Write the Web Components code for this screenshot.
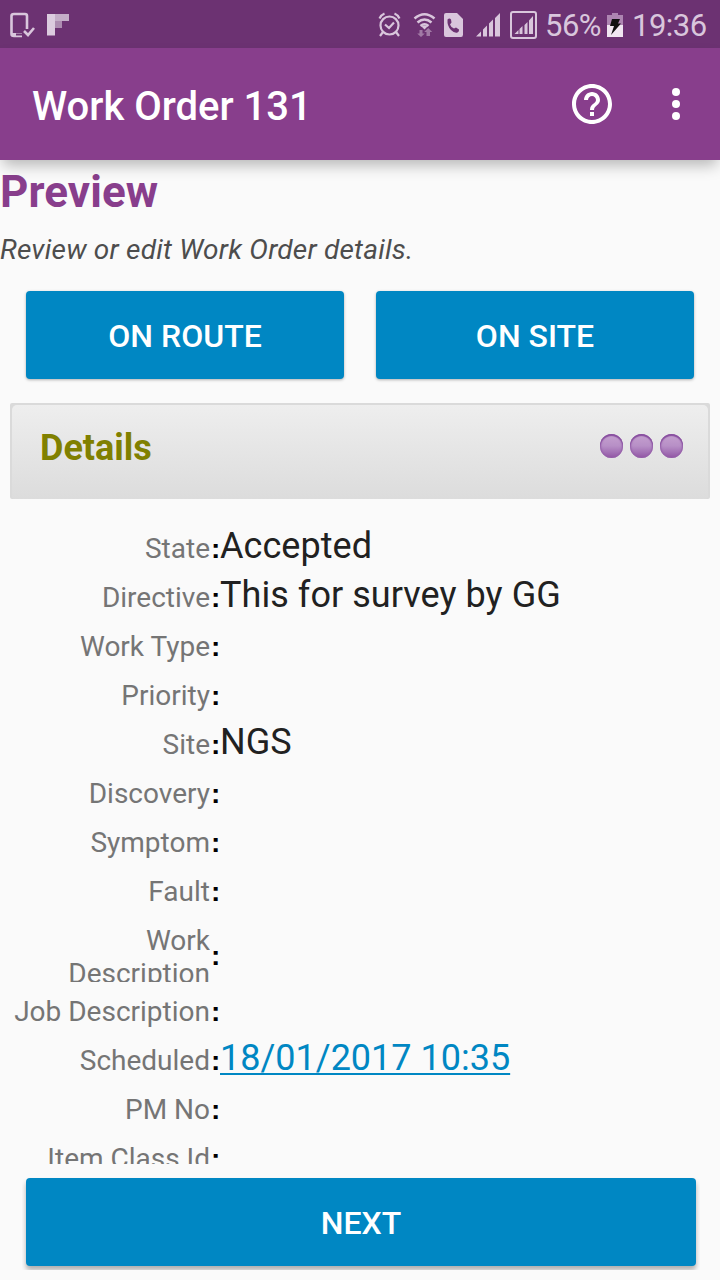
<!DOCTYPE html>
<html lang="en">
<head>
<meta charset="utf-8">
<title>Work Order 131</title>
<style>
  html, body { margin: 0; padding: 0; background: #fafafa; }
  body { font-family: Roboto, sans-serif; width: 720px; height: 1280px; overflow: hidden; }
</style>
</head>
<body>
<work-order-screen></work-order-screen>

<script>
function define(name, html) {
  const template = document.createElement('template');
  template.innerHTML = html;
  customElements.define(name, class extends HTMLElement {
    constructor() {
      super();
      this.attachShadow({ mode: 'open' }).append(template.content.cloneNode(true));
    }
  });
}

define('status-bar', `
<style>
  :host { display: grid; grid-template-columns: 80px 1fr 172px 60px 26px 92px; height: 48px; background: #6c3272; color: #d9c6dc; font-size: 31px; line-height: 52px; white-space: nowrap; }
  svg { display: block; height: 48px; }
  .pct { padding-left: 3px; letter-spacing: -.5px; }
  .time { padding-left: 4px; letter-spacing: -.5px; }
</style>
<svg width="80" viewBox="0 0 80 48" fill="none">
  <path d="M27 29V16q0-2-2-2H14q-2.500 0-2.500 2v18q0 2 2.500 2h8" stroke="#d9c6dc" stroke-width="2.600"/>
  <path d="M11 33h11v2.500H12z" fill="#d9c6dc"/><path d="M16 33.500h6v2h-6z" fill="#6c3272"/>
  <path d="M24 31l4 4 6-7" stroke="#d9c6dc" stroke-width="2.600"/>
  <path d="M47 14h8v21.500h-8z" fill="#dccbdf"/><path d="M55 14h14v7H55z" fill="#c4adc8"/><path d="M55 21h7v7h-7z" fill="#ad8cb1"/>
</svg>
<span></span>
<svg width="172" viewBox="370 0 172 48" fill="none">
  <g stroke="#d9c6dc" stroke-width="2.200">
    <circle cx="389.500" cy="25.500" r="9"/>
    <path d="M379.500 18.500q1.500-3.500 5-5M399.500 18.500q-1.500-3.500-5-5M383 32l-3 4M396 32l3 4M385 24.500l4 3.500 5-5.500"/>
    <path d="M414.500 18.500q10-8.500 20 0M417.500 22.500q7-6 14 0M420.500 26q4-3.500 8 0" stroke-width="2.500"/>
  </g>
  <path d="M421.500 26.500q3-2 6 0l-3 3z" fill="#d9c6dc"/>
  <path d="M419.500 30h3v3.500h2.300L421 37l-3.800-3.500h2.300zM426.500 36v-4h-2.300l4-4 4 4h-2.200v4z" fill="#a17aa5"/>
  <path d="M446 13h11l6 6v15.500q0 2.500-2 2.500h-15q-2 0-2-2V15q0-2 2-2z" fill="#d9c6dc"/>
  <path d="M447.500 19.500q2-2 3.500 0l.5 3-1.500 2q1 3 4 4l2-1 3 2q.5 2-1.500 3-3 1-6.500-2.500-4-4-3.500-10.500z" fill="#6c3272"/>
  <path d="M476 36.500l5-5v5zM483 36.500V29.500l4-4v11zM489 36.500V23.500l4-4v17zM495 36.500V18l5-5v23.500z" fill="#d9c6dc"/>
  <rect x="511" y="12" width="25" height="26" rx="2" stroke="#d9c6dc" stroke-width="2"/>
  <path d="M514.500 34l4-4v4zM519.500 34v-5l3-3v8zM524.500 34V25l3-3v12zM529 34V20.500l4-4.500v18z" fill="#d9c6dc"/>
</svg>
<span class="pct">56%</span>
<svg width="26" viewBox="602 0 26 48">
  <path d="M607 15h5v-2h6v2h5v10h-16z" fill="#ad85b1"/><path d="M607 25h16v12h-16z" fill="#f0e6f1"/>
  <path d="M612 19h8l-2 4.500h3L611 35l3-9h-4z" fill="#111"/>
</svg>
<span class="time">19:36</span>
`);

define('app-bar', `
<style>
  :host { display: flex; align-items: center; height: 112px; box-sizing: border-box; padding-left: 32px; background: #883e8c; color: #fff; position: relative; z-index: 1; box-shadow: 0 8px 14px -3px rgba(0,0,0,.28); }
  h1 { flex: 1; margin: 5px 0 0; font-size: 40px; line-height: 48px; font-weight: 500; padding-top: 1px; }
  svg { display: block; flex: none; }
</style>
<h1><slot></slot></h1>
<svg width="160" height="112" viewBox="560 48 160 112">
  <g transform="translate(568 80) scale(2)"><path fill="#fff" d="M11 18h2v-2h-2v2zm1-16C6.480 2 2 6.480 2 12s4.480 10 10 10 10-4.480 10-10S17.520 2 12 2zm0 18c-4.410 0-8-3.590-8-8s3.590-8 8-8 8 3.590 8 8-3.590 8-8 8zm0-14c-2.210 0-4 1.790-4 4h2c0-1.100.9-2 2-2s2 .9 2 2c0 2-3 1.750-3 5h2c0-2.250 3-2.500 3-5 0-2.210-1.790-4-4-4z"/></g>
  <g fill="#fff"><circle cx="676" cy="92" r="4"/><circle cx="676" cy="104" r="4"/><circle cx="676" cy="116" r="4"/></g>
</svg>
`);

define('action-button', `
<style>
  :host { display: block; flex: 1; }
  button { display: block; width: 100%; height: 88px; border: 0; padding: 2px 0 0; border-radius: 4px; background: #0087c3; color: #fff; font: 500 32px/38px Roboto, sans-serif; box-shadow: var(--button-shadow, 0 1px 3px rgba(0,0,0,.3)); }
</style>
<button><slot></slot></button>
`);

define('section-header', `
<style>
  :host { display: flex; justify-content: space-between; box-sizing: border-box; height: 96px; margin: 0 10px; background: #dadada; border-radius: 2px; padding: 2px 2px 0; }
  .face { flex: 1; display: flex; justify-content: space-between; align-items: flex-start; border-radius: 5px 5px 3px 3px; background: linear-gradient(#eee, #dcdcdc); padding: 22px 25px 0 28px; }
  h3 { margin: 0; font-size: 36px; line-height: 42px; font-weight: 700; color: #808000; }
  .dots { display: flex; gap: 7px; margin-top: 7px; }
  i { box-sizing: border-box; width: 23px; height: 24px; border-radius: 50%; background: linear-gradient(#c6a2d0, #b78fc6 50%, #9156a5); box-shadow: inset 0 2px 1px #8950a0, inset 1px 0 2px #9560aa, inset -1px 0 2px #9560aa; }
</style>
<div class="face"><h3><slot></slot></h3><div class="dots"><i></i><i></i><i></i></div></div>
`);

define('detail-row', `
<style>
  :host { display: grid; grid-template-columns: 210px 10px 1fr; height: 49px; align-items: start; --label-height: 39px; --colon-top: 0px; }
  :host([tall]) { height: 71px; --label-height: 58px; --colon-top: 15px; }
  .label { margin-top: 10px; height: var(--label-height); overflow: hidden; text-align: right; font-size: 28px; line-height: 33px; color: #757575; }
  .colon { margin-top: var(--colon-top); padding: 10px 0 0 1px; font: bold 28px/33px "Liberation Sans", sans-serif; color: #000; }
  .value { padding-top: 3px; font-size: 36px; line-height: 42px; letter-spacing: .05px; color: #212121; white-space: nowrap; }
  :host([link]) .value { letter-spacing: 0; color: #0087c3; text-decoration: underline; text-decoration-thickness: 2px; text-underline-offset: 3px; text-decoration-skip-ink: none; }
</style>
<div class="label"><slot name="label"></slot></div><div class="colon">:</div><div class="value"><slot></slot></div>
`);

define('work-order-screen', `
<style>
  :host { display: flex; flex-direction: column; width: 720px; height: 1280px; background: #fafafa; overflow: hidden; }
  :host > * { flex: none; }
  h2 { margin: 6px 0 0; font-size: 44px; line-height: 52px; font-weight: 700; letter-spacing: .1px; color: #883e8c; }
  p { margin: 15px 0 0; font-size: 28px; line-height: 33px; font-style: italic; letter-spacing: .21px; color: #4d4d4d; }
  .actions { display: flex; gap: 32px; padding: 0 26px; margin: 25px 0 24px; }
  .rows { margin-top: 23px; height: 642px; overflow: hidden; }
  .next { display: flex; margin: 10px 20px 0 22px; padding: 4px 4px 4px; overflow: hidden; --button-shadow: 0 4px 5px rgba(0,0,0,.3); }
</style>
<status-bar></status-bar>
<app-bar>Work Order 131</app-bar>
<h2>Preview</h2>
<p>Review or edit Work Order details.</p>
<div class="actions"><action-button>ON ROUTE</action-button><action-button>ON SITE</action-button></div>
<section-header>Details</section-header>
<div class="rows">
  <detail-row><span slot="label">State</span>Accepted</detail-row>
  <detail-row><span slot="label">Directive</span>This for survey by GG</detail-row>
  <detail-row><span slot="label">Work Type</span></detail-row>
  <detail-row><span slot="label">Priority</span></detail-row>
  <detail-row><span slot="label">Site</span>NGS</detail-row>
  <detail-row><span slot="label">Discovery</span></detail-row>
  <detail-row><span slot="label">Symptom</span></detail-row>
  <detail-row><span slot="label">Fault</span></detail-row>
  <detail-row tall><span slot="label">Work<br>Description</span></detail-row>
  <detail-row><span slot="label">Job Description</span></detail-row>
  <detail-row link><span slot="label">Scheduled</span>18/01/2017 10:35</detail-row>
  <detail-row><span slot="label">PM No</span></detail-row>
  <detail-row><span slot="label">Item Class Id</span></detail-row>
</div>
<div class="next"><action-button>NEXT</action-button></div>
`);
</script>
</body>
</html>
